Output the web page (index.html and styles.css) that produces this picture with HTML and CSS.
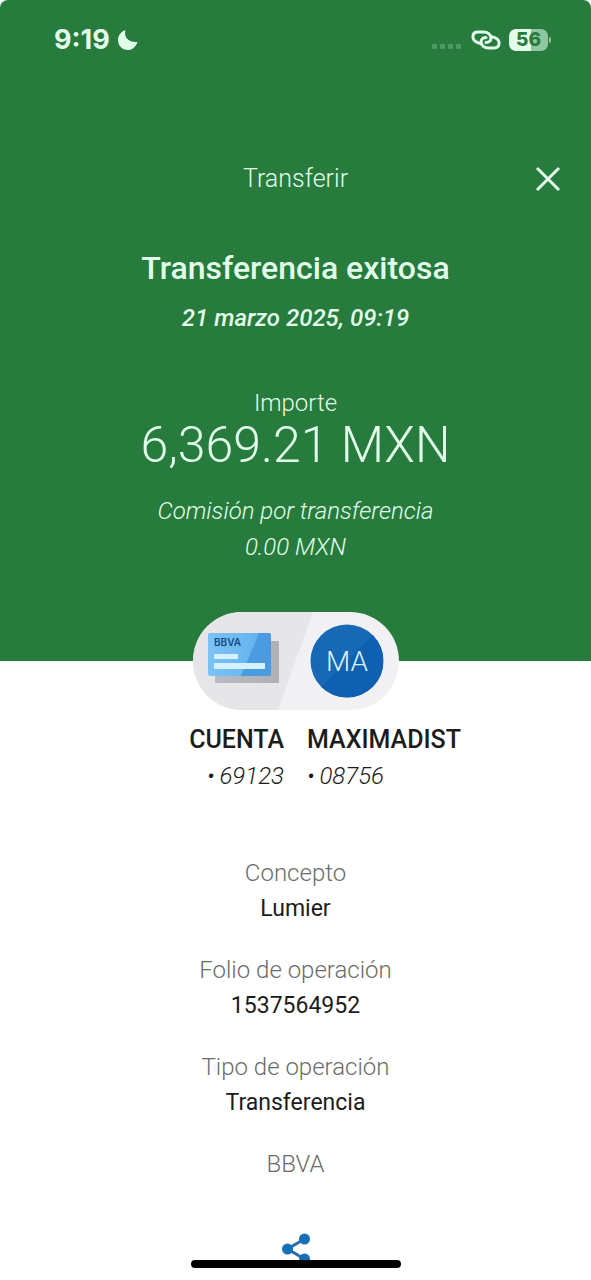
FILE: index.html
```html
<!DOCTYPE html>
<html lang="es">
<head>
<meta charset="utf-8">
<meta name="viewport" content="width=device-width, initial-scale=1">
<title>Transferencia exitosa</title>
<link rel="stylesheet" href="styles.css">
</head>
<body>
<header class="hero">
  <div class="status">
    <div class="status-group">
      <span class="clock">9:19</span>
      <svg class="moon" width="22" height="22" viewBox="0 0 22 22" aria-hidden="true"><path d="M8.500 1C6.500 7.500 11 14 20.500 13C18.500 18.500 15 21 11 21C5 21 1 16.500 1 11C1 6.500 4 2.500 8.500 1Z" fill="currentColor"/></svg>
    </div>
    <div class="status-group">
      <svg class="signal" width="32" height="24" viewBox="0 0 32 24" aria-hidden="true"><g fill="currentColor"><rect x="1" y="16" width="5" height="5" rx="1"/><rect x="9" y="16" width="5" height="5" rx="1"/><rect x="17" y="16" width="5" height="5" rx="1"/><rect x="25" y="16" width="5" height="5" rx="1"/></g></svg>
      <svg class="link" width="32" height="24" viewBox="0 0 32 24" fill="none" stroke="currentColor" stroke-width="3" stroke-linecap="round" aria-hidden="true"><path d="M11 15.300C9.500 15.300 8 15 6.500 14C1.500 11.500 1.500 4 8 4H13.500C17.500 4 21 6.500 21 10C21 13 18.500 14.500 16 14.500"/><path d="M21 8.700C22.500 8.700 24 9 25.500 10C30.500 12.500 30.500 20 24 20H18.500C14.500 20 11 17.500 11 14C11 11 13.500 9.500 16 9.500"/></svg>
      <span class="battery">56</span>
    </div>
  </div>
  <div class="nav">
    <span class="nav-title">Transferir</span>
    <button class="close" type="button" aria-label="Cerrar">
      <svg width="26" height="26" viewBox="0 0 26 26" fill="none" stroke="currentColor" stroke-width="3" aria-hidden="true"><path d="M2 2L24 24M24 2L2 24"/></svg>
    </button>
  </div>
  <h1 class="title">Transferencia exitosa</h1>
  <p class="date">21 marzo 2025, 09:19</p>
  <p class="amount-label">Importe</p>
  <p class="amount">6,369.21 MXN</p>
  <p class="fee">Comisión por transferencia<br>0.00 MXN</p>
</header>
<main>
  <svg class="pill" width="206" height="98" viewBox="0 0 206 98" aria-hidden="true">
    <defs>
      <clipPath id="round"><rect width="206" height="98" rx="49"/></clipPath>
      <clipPath id="disc"><circle cx="154" cy="49" r="36.500"/></clipPath>
      <linearGradient id="shade" x1="0" y1="0" x2="1" y2="0"><stop offset="0" stop-color="#b9bbc2"/><stop offset="1" stop-color="#b0afb5"/></linearGradient>
      <linearGradient id="front" x1="0" y1="0" x2="1" y2="0"><stop offset="0" stop-color="#7cc3f5"/><stop offset="1" stop-color="#5faeea"/></linearGradient>
    </defs>
    <g clip-path="url(#round)"><rect width="206" height="98" fill="#f1f1f3"/><path d="M0 0H120L85 98H0Z" fill="#e6e6e9"/></g>
    <rect x="22" y="29" width="64" height="42" rx="1" fill="url(#shade)"/>
    <rect x="15" y="21" width="63" height="43" rx="2" fill="url(#front)"/>
    <path d="M66 21H76Q78 21 78 23V62Q78 64 76 64H48Z" fill="#4a9be0"/>
    <text class="card-brand" x="21" y="34">BBVA</text>
    <rect x="21" y="42" width="24" height="5" fill="#d4f1ff"/>
    <rect x="21" y="51" width="51" height="6" fill="#d4f1ff"/>
    <g clip-path="url(#disc)"><rect x="117" y="12" width="74" height="74" fill="#1769b5"/><path d="M118 85L190 13V86Z" fill="#0f60b0"/></g>
    <text class="initials" x="154" y="59" text-anchor="middle">MA</text>
  </svg>
  <div class="parties">
    <div class="party party-from"><strong>CUENTA</strong><em>•&thinsp;69123</em></div>
    <div class="party"><strong>MAXIMADIST</strong><em>•&thinsp;08756</em></div>
  </div>
  <dl class="details">
    <div><dt>Concepto</dt><dd>Lumier</dd></div>
    <div><dt>Folio de operación</dt><dd>1537564952</dd></div>
    <div><dt>Tipo de operación</dt><dd>Transferencia</dd></div>
  </dl>
  <p class="bank">BBVA</p>
</main>
<footer class="footer">
  <button class="share" type="button" aria-label="Compartir">
    <svg width="30" height="32" viewBox="0 0 30 32" aria-hidden="true"><path d="M23.500 6L6.500 16L23.500 26" fill="none" stroke="#2a6ba8" stroke-width="3"/><g fill="#1471b8"><circle cx="23.500" cy="6" r="5.500"/><circle cx="6.500" cy="16" r="5.500"/><circle cx="23.500" cy="26" r="5.500"/></g></svg>
  </button>
  <div class="home-bar"></div>
</footer>
</body>
</html>
```
FILE: styles.css
```css
* { box-sizing: border-box; }
body {
  margin: 0;
  background: #fff;
  color: #1c1c1c;
  font-family: Roboto, "Liberation Sans", sans-serif;
  font-size: 24px;
  font-weight: 300;
  line-height: 36px;
  text-align: center;
}
h1, p, dl, dd { margin: 0; }
button { border: 0; padding: 0; background: none; color: inherit; display: flex; }
.hero {
  background: #267b3d;
  color: #e2fdea;
  border-radius: 8px 8px 0 0;
  padding-bottom: 96px;
}
.status {
  display: flex;
  justify-content: space-between;
  align-items: center;
  height: 80px;
  padding: 0 43px 0 54px;
}
.status-group { display: flex; align-items: center; gap: 7px; }
.clock { font-family: Inter, sans-serif; font-size: 27px; font-weight: 700; }
.signal { color: #4b9a60; }
.battery {
  position: relative;
  width: 39px;
  height: 22px;
  border-radius: 7px;
  background: linear-gradient(90deg, #e2fdea 56%, #90c59d 56%);
  color: #267b3d;
  font-family: Inter, sans-serif;
  font-size: 19px;
  font-weight: 800;
  line-height: 22px;
}
.battery::after {
  content: "";
  position: absolute;
  right: -3px;
  top: 8px;
  width: 2px;
  height: 6px;
  border-radius: 0 2px 2px 0;
  background: #90c59d;
}
.nav {
  display: grid;
  grid-template-columns: 1fr auto 1fr;
  align-items: center;
  height: 50px;
  margin-top: 74px;
  padding: 0 30px;
}
.nav-title { grid-column: 2; font-size: 25px; }
.close { justify-self: end; }
.title { margin-top: 44px; font-size: 32px; font-weight: 500; line-height: 40px; }
.date { margin-top: 12px; font-style: italic; font-weight: 500; }
.amount-label { margin-top: 51px; line-height: 32px; }
.amount { font-size: 50px; line-height: 52px; }
.fee { margin-top: 22px; font-style: italic; }
.pill { display: block; position: relative; margin: -49px auto 0; }
.card-brand { font: 600 10px Inter, sans-serif; fill: #124a86; }
.initials { font-size: 28px; fill: #d9f3ff; }
.parties {
  display: grid;
  grid-template-columns: 1fr 1fr;
  gap: 23px;
  margin-top: 12px;
  text-align: left;
}
.party { display: flex; flex-direction: column; }
.party-from { text-align: right; }
.party strong { font-size: 25px; font-weight: 500; }
.details { display: grid; gap: 25px; margin-top: 61px; }
dt, .bank { color: #6c6c6c; }
dd { font-size: 23px; font-weight: 400; }
.bank { margin-top: 25px; }
.footer {
  display: flex;
  justify-content: center;
  align-items: flex-start;
  position: relative;
  height: 47px;
  margin-top: 51px;
}
.home-bar {
  position: absolute;
  left: 50%;
  bottom: 12px;
  width: 210px;
  height: 8px;
  margin-left: -105px;
  border-radius: 4px;
  background: #000;
}
```
